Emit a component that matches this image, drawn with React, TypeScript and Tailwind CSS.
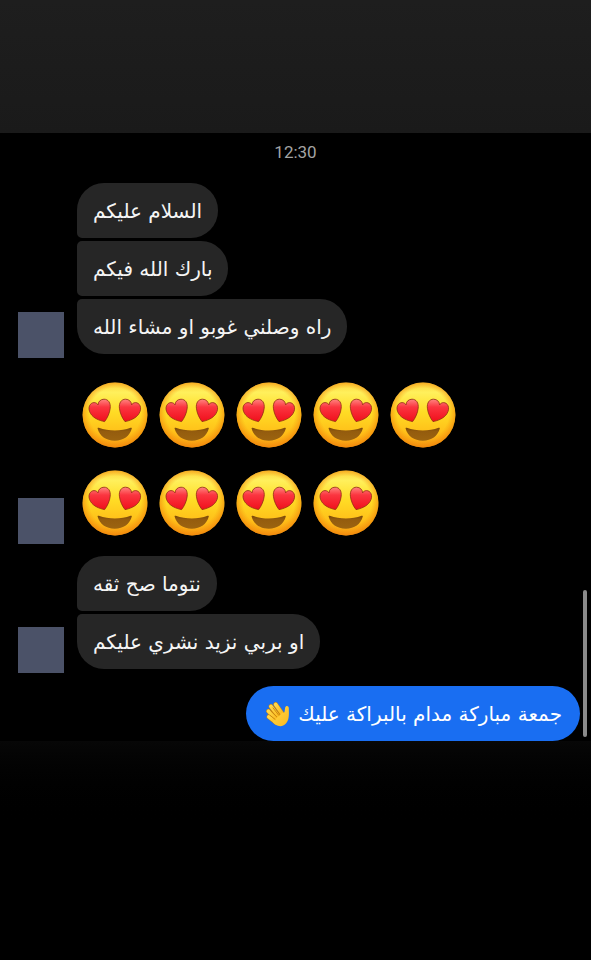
import React from "react";
import clsx from "clsx";

interface TextGroup {
    kind: "text";
    lines: string[];
}

interface EmojiGroup {
    kind: "emoji";
    rows: number[];
}

type Group = TextGroup | EmojiGroup;

const groups: Group[] = [
    { kind: "text", lines: ["السلام عليكم", "بارك الله فيكم", "راه وصلني غوبو او مشاء الله"] },
    { kind: "emoji", rows: [5, 4] },
    { kind: "text", lines: ["نتوما صح ثقه", "او بربي نزيد نشري عليكم"] }
];

// Gradients shared by every face
function EmojiDefs() {
    return (
        <svg width="0" height="0" className="absolute" aria-hidden="true">
            <defs>
                <linearGradient id="face" x1="0" y1="0" x2="0" y2="1">
                    <stop offset="0" stopColor="#fdd23a" />
                    <stop offset="0.15" stopColor="#fff05c" />
                    <stop offset="0.45" stopColor="#ffdc25" />
                    <stop offset="0.8" stopColor="#ffbd18" />
                    <stop offset="1" stopColor="#f8a216" />
                </linearGradient>
                <radialGradient id="rim" cx="0.5" cy="0.48" r="0.52">
                    <stop offset="0.76" stopColor="#f58a0c" stopOpacity="0" />
                    <stop offset="1" stopColor="#f07f08" stopOpacity="0.7" />
                </radialGradient>
                <linearGradient id="heart" x1="0" y1="0" x2="0" y2="1">
                    <stop offset="0" stopColor="#ff8580" />
                    <stop offset="0.35" stopColor="#fb3540" />
                    <stop offset="1" stopColor="#f00f1c" />
                </linearGradient>
                <linearGradient id="mouth" x1="0" y1="0" x2="0" y2="1">
                    <stop offset="0" stopColor="#7a480a" />
                    <stop offset="0.3" stopColor="#945c0e" />
                    <stop offset="1" stopColor="#9c6410" />
                </linearGradient>
                <linearGradient id="hand" x1="0" y1="0" x2="1" y2="1">
                    <stop offset="0" stopColor="#ffd84a" />
                    <stop offset="1" stopColor="#fcb81c" />
                </linearGradient>
            </defs>
        </svg>
    );
}

const HEART = "M22.6 39.6 C17.6 38.6 11.6 36.4 8.6 31.6 C4.8 25.4 8.4 20.6 12 20.6 C14 20.6 15.2 21.6 16 22.8 C16.2 19.6 18.6 17.2 22 17.2 C26.4 17.2 28.8 21 28.2 26.2 C27.7 31 25.4 36 22.6 39.6Z";

function HeartEyes() {
    return (
        <svg viewBox="0 0 66 66" className="size-[66px]" role="img" aria-label="heart eyes">
            <circle cx="33" cy="33" r="32.4" fill="url(#face)" />
            <circle cx="33" cy="33" r="32.4" fill="url(#rim)" />
            <path d={HEART} fill="url(#heart)" stroke="#8f2b12" strokeWidth="0.8" />
            <path d={HEART} fill="url(#heart)" stroke="#8f2b12" strokeWidth="0.8" transform="translate(65.6 0) scale(-1 1)" />
            <path
                d="M15.6 46.6 C15.4 45.8 16 45.4 16.8 45.8 C27 49.4 39 49.4 48.6 45.8 C49.4 45.4 50 45.8 49.8 46.6 C47.8 54.2 41.6 58.8 32.8 58.8 C24 58.8 17.6 54.2 15.6 46.6Z"
                fill="url(#mouth)"
            />
        </svg>
    );
}

function WavingHand() {
    return (
        <svg viewBox="0 0 26 28" className="h-7 w-[26px] shrink-0" role="img" aria-label="waving hand">
            <g stroke="#c9820c" strokeWidth="4.6" strokeLinecap="round" fill="none">
                <path d="M11.6 4.4 L18 13.5 M6.9 6.4 L15 17 M4.4 11.2 L13 19.5 M4.8 16.8 L12 22.4" />
            </g>
            <g stroke="url(#hand)" strokeWidth="3.6" strokeLinecap="round" fill="none">
                <path d="M4.8 16.8 L12 22.4" />
                <path d="M4.4 11.2 L13 19.5" />
                <path d="M6.9 6.4 L15 17" />
                <path d="M11.6 4.4 L18 13.5" />
            </g>
            <path
                d="M10 20.5 L18.6 12.4 C19.6 13 20.4 12.6 20.6 11.4 L21.2 7.6 C21.6 5.2 24.8 5.4 24.8 8 C24.8 11.8 25.2 14 24.6 17.6 C23.8 23 20.4 26.2 16.4 26.2 C13 26.2 9.6 24 8.6 21.6Z"
                fill="url(#hand)"
            />
            <path d="M8.8 7.6 L15 15.6 M6.4 10.6 L13 17.2 M5.6 15 L11.4 19.6" stroke="#c27b0a" strokeWidth="0.8" fill="none" />
        </svg>
    );
}

function Avatar() {
    return <div className="-mb-1 size-[46px] shrink-0 bg-[#4b5268]" />;
}

function Bubble({ text, first, last }: { text: string; first: boolean; last: boolean }) {
    return (
        <p
            dir="rtl"
            className={clsx(
                "flex h-[55px] items-center rounded-r-[27px] bg-[#262626] px-4 text-xl whitespace-nowrap text-[#f5f5f5]",
                first ? "rounded-tl-[27px]" : "rounded-tl-[5px]",
                last ? "rounded-bl-[27px]" : "rounded-bl-[5px]"
            )}
        >
            {text}
        </p>
    );
}

export default function App() {
    return (
        <div className="flex min-h-screen flex-col bg-black font-['DejaVu_Sans',sans-serif]">
            <EmojiDefs />
            <header className="h-[133px] bg-linear-to-b from-[#1e1e1e] to-[#1a1a1a]" />

            <main className="relative flex flex-col pl-[18px]">
                <time className="mt-[7px] mr-[18px] text-center font-[Roboto] text-[17px] leading-6 text-[#a3a3a3]">12:30</time>

                <section className="mt-[19px] flex flex-col gap-4">
                    {groups.map((group, i) => (
                        <div key={i} className="flex items-end gap-[13px]">
                            <Avatar />
                            {group.kind === "text" ? (
                                <div className="flex flex-col items-start gap-[3px]">
                                    {group.lines.map((line, n) => (
                                        <Bubble key={line} text={line} first={n === 0} last={n === group.lines.length - 1} />
                                    ))}
                                </div>
                            ) : (
                                <div className="flex flex-col gap-[22px] px-[5px] pt-3 pb-1">
                                    {group.rows.map((count, row) => (
                                        <div key={row} className="flex gap-[11px]">
                                            {Array.from({ length: count }, (_, n) => (
                                                <HeartEyes key={n} />
                                            ))}
                                        </div>
                                    ))}
                                </div>
                            )}
                        </div>
                    ))}
                </section>

                <p
                    dir="rtl"
                    className="mt-[17px] mr-[11px] flex h-[55px] items-center gap-2 self-end rounded-full bg-[#196ef2] px-[18px] text-xl whitespace-nowrap text-white"
                >
                    <span>جمعة مباركة مدام بالبراكة عليك</span>
                    <WavingHand />
                </p>

                <div className="absolute right-1 bottom-1 h-[147px] w-1 rounded-full bg-[#8a8a8a]" />
            </main>

            <footer className="flex-1 bg-linear-to-b from-[#070707] to-black to-40%" />
        </div>
    );
}
